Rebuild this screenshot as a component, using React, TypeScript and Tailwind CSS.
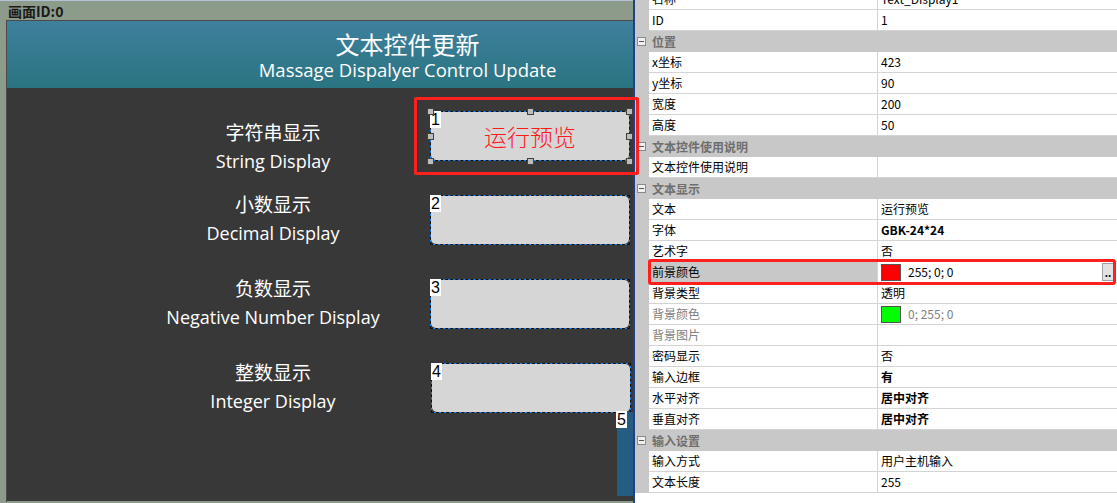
import type { ReactNode } from 'react'

const CJK = { fontFamily: '"Noto Sans CJK SC", sans-serif' }
const LATIN = { fontFamily: '"Open Sans", "Noto Sans CJK SC", sans-serif' }

type Widget = { id: number; cn: string; en: string; labelTop: string; boxLeft: string; text?: string }

const widgets: Widget[] = [
  { id: 1, cn: '字符串显示', en: 'String Display', labelTop: 'mt-[7px]', boxLeft: 'ml-[37px]', text: '运行预览' },
  { id: 2, cn: '小数显示', en: 'Decimal Display', labelTop: '-mt-[5px]', boxLeft: 'ml-[37px]' },
  { id: 3, cn: '负数显示', en: 'Negative Number Display', labelTop: '-mt-[5px]', boxLeft: 'ml-[37px]' },
  { id: 4, cn: '整数显示', en: 'Integer Display', labelTop: '-mt-[5px]', boxLeft: 'ml-[38px]' },
]

type Row =
  | { kind: 'cat'; label: string }
  | { kind: 'prop'; label: string; value?: ReactNode; bold?: boolean; dim?: boolean; selected?: boolean }

const rows: Row[] = [
  { kind: 'prop', label: '名称', value: 'Text_Display1' },
  { kind: 'prop', label: 'ID', value: '1' },
  { kind: 'cat', label: '位置' },
  { kind: 'prop', label: 'x坐标', value: '423' },
  { kind: 'prop', label: 'y坐标', value: '90' },
  { kind: 'prop', label: '宽度', value: '200' },
  { kind: 'prop', label: '高度', value: '50' },
  { kind: 'cat', label: '文本控件使用说明' },
  { kind: 'prop', label: '文本控件使用说明' },
  { kind: 'cat', label: '文本显示' },
  { kind: 'prop', label: '文本', value: '运行预览' },
  { kind: 'prop', label: '字体', value: 'GBK-24*24', bold: true },
  { kind: 'prop', label: '艺术字', value: '否' },
  { kind: 'prop', label: '前景颜色', selected: true },
  { kind: 'prop', label: '背景类型', value: '透明' },
  { kind: 'prop', label: '背景颜色', dim: true },
  { kind: 'prop', label: '背景图片', dim: true },
  { kind: 'prop', label: '密码显示', value: '否' },
  { kind: 'prop', label: '输入边框', value: '有', bold: true },
  { kind: 'prop', label: '水平对齐', value: '居中对齐', bold: true },
  { kind: 'prop', label: '垂直对齐', value: '居中对齐', bold: true },
  { kind: 'cat', label: '输入设置' },
  { kind: 'prop', label: '输入方式', value: '用户主机输入' },
  { kind: 'prop', label: '文本长度', value: '255' },
]

function Tag({ n }: { n: number }) {
  return (
    <div
      className="absolute -left-px -top-px flex h-[17px] w-[11px] items-center justify-center bg-white text-[16px] leading-none text-black"
      style={{ fontFamily: '"Liberation Sans", sans-serif' }}
    >
      {n}
    </div>
  )
}

function Handles() {
  const spots = [
    'left-[-4px] top-[-4px]',
    'left-[96px] top-[-4px]',
    'left-[195px] top-[-4px]',
    'left-[-4px] top-[21px]',
    'left-[195px] top-[21px]',
    'left-[-4px] top-[46px]',
    'left-[96px] top-[46px]',
    'left-[195px] top-[46px]',
  ]
  return (
    <>
      {spots.map((s) => (
        <div key={s} className={`absolute ${s} h-[7px] w-[7px] border border-[#404040] bg-[#bdbdbd]`} />
      ))}
    </>
  )
}

function TextBox({ w }: { w: Widget }) {
  return (
    <div className={`relative h-[50px] w-[200px] shrink-0 border border-dashed border-[#111] bg-[#1e88ff] ${w.boxLeft}`}>
      <div className="h-full w-full bg-[#383838]">
        <div className="flex h-full w-full items-center justify-center rounded-[5px] bg-[#d6d6d6]">
          {w.text && (
            <span className="text-[23px] font-light text-[#ff1a1a]" style={CJK}>
              {w.text}
            </span>
          )}
        </div>
      </div>
      <Tag n={w.id} />
      {w.id === 1 && <Handles />}
    </div>
  )
}

function Canvas() {
  return (
    <div className="flex h-[503px] w-[633px] shrink-0 flex-col overflow-hidden border-t border-[#b4c2d6] bg-[#8d9b8b]">
      <div className="h-[19px] pl-[8px] text-[14px] font-bold leading-[20px] text-[#1a1a1a]" style={CJK}>
        画面ID:0
      </div>
      <div className="ml-[6px] h-[482px] w-[802px] border-l border-t border-[#4a4a4a]">
        <div className="flex h-[67px] flex-col items-center bg-gradient-to-b from-[#3f809d] to-[#2a7481] pt-[8px] text-white">
          <div className="text-[24px] leading-[30px]" style={CJK}>
            文本控件更新
          </div>
          <div className="text-[18.5px] leading-[22px]" style={LATIN}>
            Massage Dispalyer Control Update
          </div>
        </div>
        <div className="flex h-[413px] flex-col gap-[34px] bg-[#383838] pt-[23px]">
          {widgets.map((w) => (
            <div key={w.id} className="flex h-[50px] items-start">
              <div className={`ml-[146px] w-[240px] shrink-0 text-center text-white ${w.labelTop}`}>
                <div className="text-[19px] leading-[28px]" style={CJK}>
                  {w.cn}
                </div>
                <div className="text-[18px] leading-[30px]" style={LATIN}>
                  {w.en}
                </div>
              </div>
              <TextBox w={w} />
            </div>
          ))}
          <div className="relative -mt-[35px] ml-[610px] h-[84px] w-[100px] bg-[#245c82]">
            <Tag n={5} />
          </div>
        </div>
      </div>
    </div>
  )
}

function Swatch({ color }: { color: string }) {
  return <span className={`h-[17px] w-[20px] shrink-0 border border-[#555] ${color}`} />
}

function Properties() {
  return (
    <div className="h-[503px] flex-1 overflow-hidden border-l-2 border-[#1f3f86] bg-white text-[12px] text-black" style={CJK}>
      <div className="-mt-[11px]">
        {rows.map((r, i) =>
          r.kind === 'cat' ? (
            <div key={i} className="flex h-[21px] items-center bg-[#c8c8c8]">
              <span className="ml-[2px] flex h-[9px] w-[9px] items-center justify-center border border-[#8a8a8a] bg-[#f0f0f0]">
                <span className="h-px w-[5px] bg-[#555]" />
              </span>
              <span className="ml-[6px] font-bold text-[#6e6e6e]">{r.label}</span>
            </div>
          ) : (
            <div key={i} className="flex h-[21px]">
              <div className="w-[14px] shrink-0 bg-[#c8c8c8]" />
              <div
                className={`flex w-[229px] shrink-0 items-center border-b border-r border-[#d4d4d4] pl-[3px] ${
                  r.selected ? 'bg-[#c8c8c8]' : ''
                } ${r.dim ? 'text-[#808080]' : ''}`}
              >
                {r.label}
              </div>
              <div className="flex flex-1 items-center border-b border-[#d4d4d4] pl-[3px]">
                {r.selected ? (
                  <>
                    <Swatch color="bg-[#ff0000]" />
                    <span className="ml-[7px]">255; 0; 0</span>
                    <span className="ml-auto mr-[3px] flex h-[18px] w-[12px] items-end justify-center border border-[#a0a0a0] bg-[#e2e2e2] pb-[2px] text-[10px] font-bold leading-none">
                      ..
                    </span>
                  </>
                ) : r.label === '背景颜色' ? (
                  <>
                    <Swatch color="bg-[#00ff00]" />
                    <span className="ml-[7px] text-[#808080]">0; 255; 0</span>
                  </>
                ) : (
                  <span className={r.bold ? 'font-bold' : ''}>{r.value}</span>
                )}
              </div>
            </div>
          ),
        )}
      </div>
    </div>
  )
}

export default function App() {
  return (
    <div className="relative flex h-[503px] w-[1117px] overflow-hidden bg-white">
      <Canvas />
      <Properties />
      {/* red annotation frames drawn over the screenshot */}
      <div className="pointer-events-none absolute left-[414px] top-[97px] h-[78px] w-[225px] rounded-[2px] border-[3px] border-[#ff1f1f]" />
      <div className="pointer-events-none absolute left-[648px] top-[259px] h-[26px] w-[468px] rounded-[3px] border-[3px] border-[#ff1f1f]" />
    </div>
  )
}
